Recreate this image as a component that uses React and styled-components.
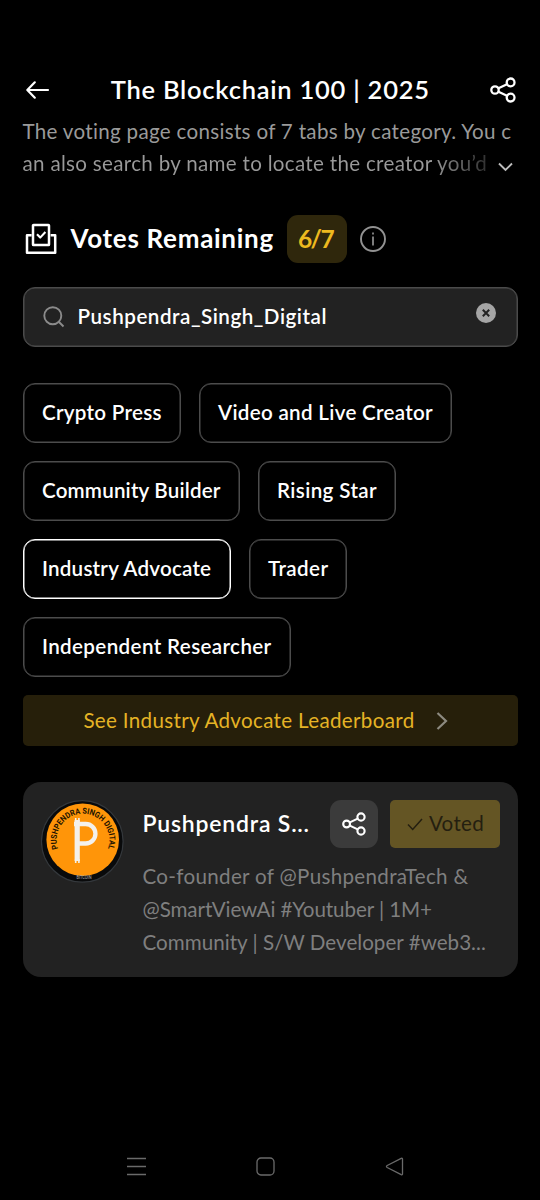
import React, { useState } from "react";
import styled, { createGlobalStyle } from "styled-components";

const GlobalStyle = createGlobalStyle`
  * {
    box-sizing: border-box;
  }
  body {
    margin: 0;
    background: #000;
    font-family: "Lato", sans-serif;
    color: #fff;
  }
`;

const categories = [
  { name: "Crypto Press", width: 158, track: 0.28 },
  { name: "Video and Live Creator", width: 253, track: 0.3 },
  { name: "Community Builder", width: 217, track: 0.18 },
  { name: "Rising Star", width: 138, track: 0.38 },
  { name: "Industry Advocate", width: 208, track: 0.22 },
  { name: "Trader", width: 98, track: 0.4 },
  { name: "Independent Researcher", width: 268, track: 0.37 },
];

const ShareIcon = ({ size }) => (
  <svg width={size} height={size} viewBox="0 0 26 26" fill="none" stroke="#fff" strokeWidth="2.3">
    <circle cx="5" cy="13" r="3.7" />
    <circle cx="20.6" cy="5.4" r="3.9" />
    <circle cx="20.6" cy="20.6" r="3.9" />
    <path d="M8.5 11.2 17 7.2M8.5 14.8 17 18.8" />
  </svg>
);

const BallotIcon = () => (
  <svg width="34" height="34" viewBox="0 0 34 34" fill="none" stroke="#fff" strokeWidth="2.5" strokeLinejoin="round">
    <path d="M8.6 13.3H4v17.4h28.2V13.3h-4.6" />
    <rect x="10" y="3" width="16" height="20" rx="0.6" />
    <path d="m14 12.3 3.2 3.3 5.2-5.6" strokeWidth="2.1" />
  </svg>
);

const Coin = () => (
  <svg width="84" height="84" viewBox="0 0 84 84">
    <defs>
      <path id="ring" d="M17 48.6A26.4 26.4 0 1 1 67 48.6" />
    </defs>
    <circle cx="41.3" cy="41.4" r="40.8" fill="#090a0b" stroke="#34383c" strokeWidth="1.2" />
    <circle cx="41.7" cy="39.7" r="36.3" fill="#ff9509" />
    <text fontFamily="Roboto" fontWeight="700" fontSize="8.2" fill="#1c1200">
      <textPath href="#ring" textLength="100" lengthAdjust="spacingAndGlyphs">
        PUSHPENDRA SINGH DIGITAL
      </textPath>
    </text>
    <path d="M33 24h11.7a9.75 9.75 0 0 1 0 19.5H36" fill="none" stroke="#f4f1ec" strokeWidth="4.3" />
    <path d="M36.2 20v41" stroke="#f4f1ec" strokeWidth="5.2" />
    <path d="M34.7 18v4M37.9 18v4M34.7 59v4M37.9 59v4" stroke="#f4f1ec" strokeWidth="1.6" />
    <text x="43" y="79.3" textAnchor="middle" fontFamily="Roboto" fontSize="4.8" fill="#b5b5b5" textLength="15" lengthAdjust="spacingAndGlyphs">
      BITCOIN
    </text>
  </svg>
);

const App = () => {
  const [active, setActive] = useState("Industry Advocate");
  const [query, setQuery] = useState("Pushpendra_Singh_Digital");

  return (
    <Screen>
      <GlobalStyle />
      <Header>
        <IconButton aria-label="Back">
          <svg width="26" height="20" viewBox="0 0 26 20" fill="none" stroke="#fff" strokeWidth="2.2" strokeLinecap="round" strokeLinejoin="round">
            <path d="M23 10H2.6M9.8 2.3 2.3 10l7.5 7.7" />
          </svg>
        </IconButton>
        <Title>The Blockchain 100 | 2025</Title>
        <IconButton aria-label="Share">
          <ShareIcon size={26} />
        </IconButton>
      </Header>

      <Intro>
        <IntroLine>The voting page consists of 7 tabs by category. You c</IntroLine>
        <IntroRow>
          <IntroLine $fade>an also search by name to locate the creator you’d</IntroLine>
          <svg width="15" height="10" viewBox="0 0 15 10" fill="none" stroke="#bdbdbd" strokeWidth="1.9">
            <path d="m1 1.5 6.500 6.500L14 1.500" />
          </svg>
        </IntroRow>
      </Intro>

      <Votes>
        <BallotIcon />
        <VotesLabel>Votes Remaining</VotesLabel>
        <VotesBadge>6/7</VotesBadge>
        <svg width="26" height="26" viewBox="0 0 26 26" fill="none" stroke="#929292" strokeWidth="1.9">
          <circle cx="13" cy="13" r="12" />
          <path d="M13 10.500v9M13 6.500v2" strokeWidth="1.7" />
        </svg>
      </Votes>

      <SearchBox>
        <svg width="22" height="22" viewBox="0 0 22 22" fill="none" stroke="#8b8b8b" strokeWidth="1.9">
          <circle cx="9.8" cy="9.7" r="8.5" />
          <path d="m15.500 15.500 5 5" />
        </svg>
        <SearchInput value={query} onChange={(e) => setQuery(e.target.value)} />
        <ClearButton aria-label="Clear" onClick={() => setQuery("")}>
          <svg width="8" height="8" viewBox="0 0 8 8" stroke="#222" strokeWidth="2">
            <path d="m.8.8 6.400 6.400M7.200.8.8 7.200" />
          </svg>
        </ClearButton>
      </SearchBox>

      <Chips>
        {categories.map((c) => (
          <Chip
            key={c.name}
            $width={c.width}
            $track={c.track}
            $active={c.name === active}
            onClick={() => setActive(c.name)}
          >
            {c.name}
          </Chip>
        ))}
      </Chips>

      <Leaderboard>
        <span>See Industry Advocate Leaderboard</span>
        <svg width="12" height="18" viewBox="0 0 12 18" fill="none" stroke="#8d8a80" strokeWidth="2.2">
          <path d="m1.500 1 8.500 8-8.500 8" />
        </svg>
      </Leaderboard>

      <Card>
        <Coin />
        <CardBody>
          <CardTop>
            <Name>Pushpendra S...</Name>
            <ShareButton aria-label="Share creator">
              <ShareIcon size={24} />
            </ShareButton>
            <VotedButton>
              <svg width="16" height="13" viewBox="0 0 16 13" fill="none" stroke="#241f10" strokeWidth="1.5">
                <path d="m1 6.500 4.700 5L15 1" />
              </svg>
              <span>Voted</span>
            </VotedButton>
          </CardTop>
          <BioLine $track={0.31}>Co-founder of @PushpendraTech &amp;</BioLine>
          <BioLine $track={-0.08}>@SmartViewAi #Youtuber | 1M+</BioLine>
          <BioLine $track={0.02}>Community | S/W Developer #web3...</BioLine>
        </CardBody>
      </Card>

      <SystemNav>
        <svg width="19" height="19" viewBox="0 0 19 19" stroke="#6a6a6a" strokeWidth="1.3">
          <path d="M0 1.500h19M0 9.500h19M0 17.500h19" />
        </svg>
        <svg width="19" height="19" viewBox="0 0 19 19" fill="none" stroke="#6a6a6a" strokeWidth="1.3">
          <rect x="1" y="1" width="17" height="17" rx="4" />
        </svg>
        <svg width="19" height="19" viewBox="0 0 19 19" fill="none" stroke="#6a6a6a" strokeWidth="1.3" strokeLinejoin="round">
          <path d="M17.500 2v15q0 1.200-1.300.6L2.200 10.500q-1.500-1 0-2L16.200 1.400q1.300-.6 1.300.6z" />
        </svg>
      </SystemNav>
    </Screen>
  );
};

const Screen = styled.div`
  display: flex;
  flex-direction: column;
  width: 540px;
  height: 1200px;
  padding: 66px 22.5px 0;
  background: #000;
  overflow: hidden;
`;

const Header = styled.header`
  display: flex;
  align-items: center;
  justify-content: space-between;
  height: 48px;
  padding: 0 1.5px 0 2px;
`;

const Button = styled.button`
  display: flex;
  align-items: center;
  justify-content: center;
  padding: 0;
  border: none;
  background: none;
  color: #fff;
  font-family: inherit;
`;

const IconButton = styled(Button)``;

const Title = styled.h1`
  margin: 0;
  padding-bottom: 2px;
  font-size: 25.5px;
  font-weight: 600;
  letter-spacing: 0.75px;
  white-space: nowrap;
`;

const Intro = styled.div`
  height: 65px;
  padding-top: 2px;
`;

const IntroRow = styled.div`
  display: flex;
  justify-content: space-between;
  align-items: center;
  padding-right: 5px;

  svg {
    margin-top: 7px;
  }
`;

const IntroLine = styled.div`
  font-size: 20.6px;
  line-height: 31.5px;
  letter-spacing: 0.3px;
  white-space: nowrap;
  color: ${(p) => (p.$fade ? "transparent" : "#9a9a9a")};
  background: ${(p) => (p.$fade ? "linear-gradient(90deg, #9a9a9a 88%, #303030)" : "none")};
  background-clip: text;
`;

const Votes = styled.div`
  display: flex;
  align-items: center;
  height: 48px;
  margin-top: 36px;
`;

const VotesLabel = styled.h2`
  width: 217px;
  margin: 0 13px 0 0;
  padding: 0 0 2px 14px;
  font-size: 26px;
  font-weight: 700;
  letter-spacing: 0.7px;
  white-space: nowrap;
`;

const VotesBadge = styled.div`
  display: flex;
  align-items: center;
  justify-content: center;
  width: 60px;
  height: 48px;
  margin-right: 13.5px;
  padding: 0 2px 2px 0;
  border-radius: 11px;
  background: #2f270c;
  color: #edb91f;
  font-size: 24.5px;
  font-weight: 700;
  letter-spacing: -1.6px;
`;

const SearchBox = styled.div`
  display: flex;
  align-items: center;
  height: 60px;
  margin-top: 24px;
  padding: 0 20.5px 0 19.5px;
  border: 1px solid #4b4b4b;
  box-shadow: inset 0 0 0 0.5px #4b4b4b;
  border-radius: 12px;
  background: #222;
`;

const SearchInput = styled.input`
  flex: 1;
  min-width: 0;
  margin-left: 12.5px;
  padding: 0 0 2px;
  border: none;
  outline: none;
  background: none;
  color: #fff;
  font-family: inherit;
  font-size: 20.6px;
  font-weight: 600;
  letter-spacing: 0.53px;
`;

const ClearButton = styled(Button)`
  width: 20px;
  height: 20px;
  margin-bottom: 9px;
  border-radius: 50%;
  background: #a5a5a5;
`;

const Chips = styled.div`
  display: flex;
  flex-wrap: wrap;
  gap: 18px;
  margin-top: 36px;
`;

const Chip = styled(Button)`
  justify-content: flex-start;
  width: ${(p) => p.$width}px;
  height: 60px;
  padding: 0 0 2px 18.5px;
  border: 1px solid ${(p) => (p.$active ? "#fff" : "#4c4c4c")};
  box-shadow: inset 0 0 0 0.5px ${(p) => (p.$active ? "#fff" : "#4c4c4c")};
  border-radius: 12px;
  font-size: 20.6px;
  font-weight: 600;
  letter-spacing: ${(p) => p.$track}px;
  white-space: nowrap;
`;

const Leaderboard = styled(Button)`
  flex-shrink: 0;
  gap: 21px;
  height: 51px;
  margin-top: 18px;
  padding-right: 9px;
  border-radius: 5px;
  background: #261f0a;
  color: #e5b325;
  font-size: 20.6px;
  letter-spacing: 0.33px;

  span {
    padding-bottom: 2px;
  }
`;

const Card = styled.section`
  display: flex;
  height: 195px;
  margin-top: 36px;
  padding: 18px;
  border-radius: 18px;
  background: #222;

  > svg {
    flex-shrink: 0;
  }
`;

const CardBody = styled.div`
  flex: 1;
  min-width: 0;
  margin-left: 18px;
`;

const CardTop = styled.div`
  display: flex;
  align-items: center;
  height: 48px;
  margin-bottom: 12px;
`;

const Name = styled.div`
  flex: 1;
  padding-bottom: 2px;
  font-size: 23px;
  font-weight: 600;
  letter-spacing: 0.8px;
  white-space: nowrap;
`;

const ShareButton = styled(Button)`
  width: 48px;
  height: 48px;
  margin-right: 12px;
  border-radius: 11px;
  background: #3b3b3b;
`;

const VotedButton = styled(Button)`
  gap: 6px;
  width: 110px;
  height: 48px;
  padding-left: 2px;
  border-radius: 5px;
  background: #645524;
  color: #241f10;
  font-size: 20.6px;
  letter-spacing: 0.3px;

  span {
    padding-bottom: 2px;
  }
`;

const BioLine = styled.div`
  font-size: 20.6px;
  line-height: 33px;
  letter-spacing: ${(p) => p.$track}px;
  white-space: nowrap;
  color: #7f7f7f;
`;

const SystemNav = styled.nav`
  display: flex;
  justify-content: space-between;
  margin-top: auto;
  padding: 0 113.5px 24px 104px;
`;

export default App;
